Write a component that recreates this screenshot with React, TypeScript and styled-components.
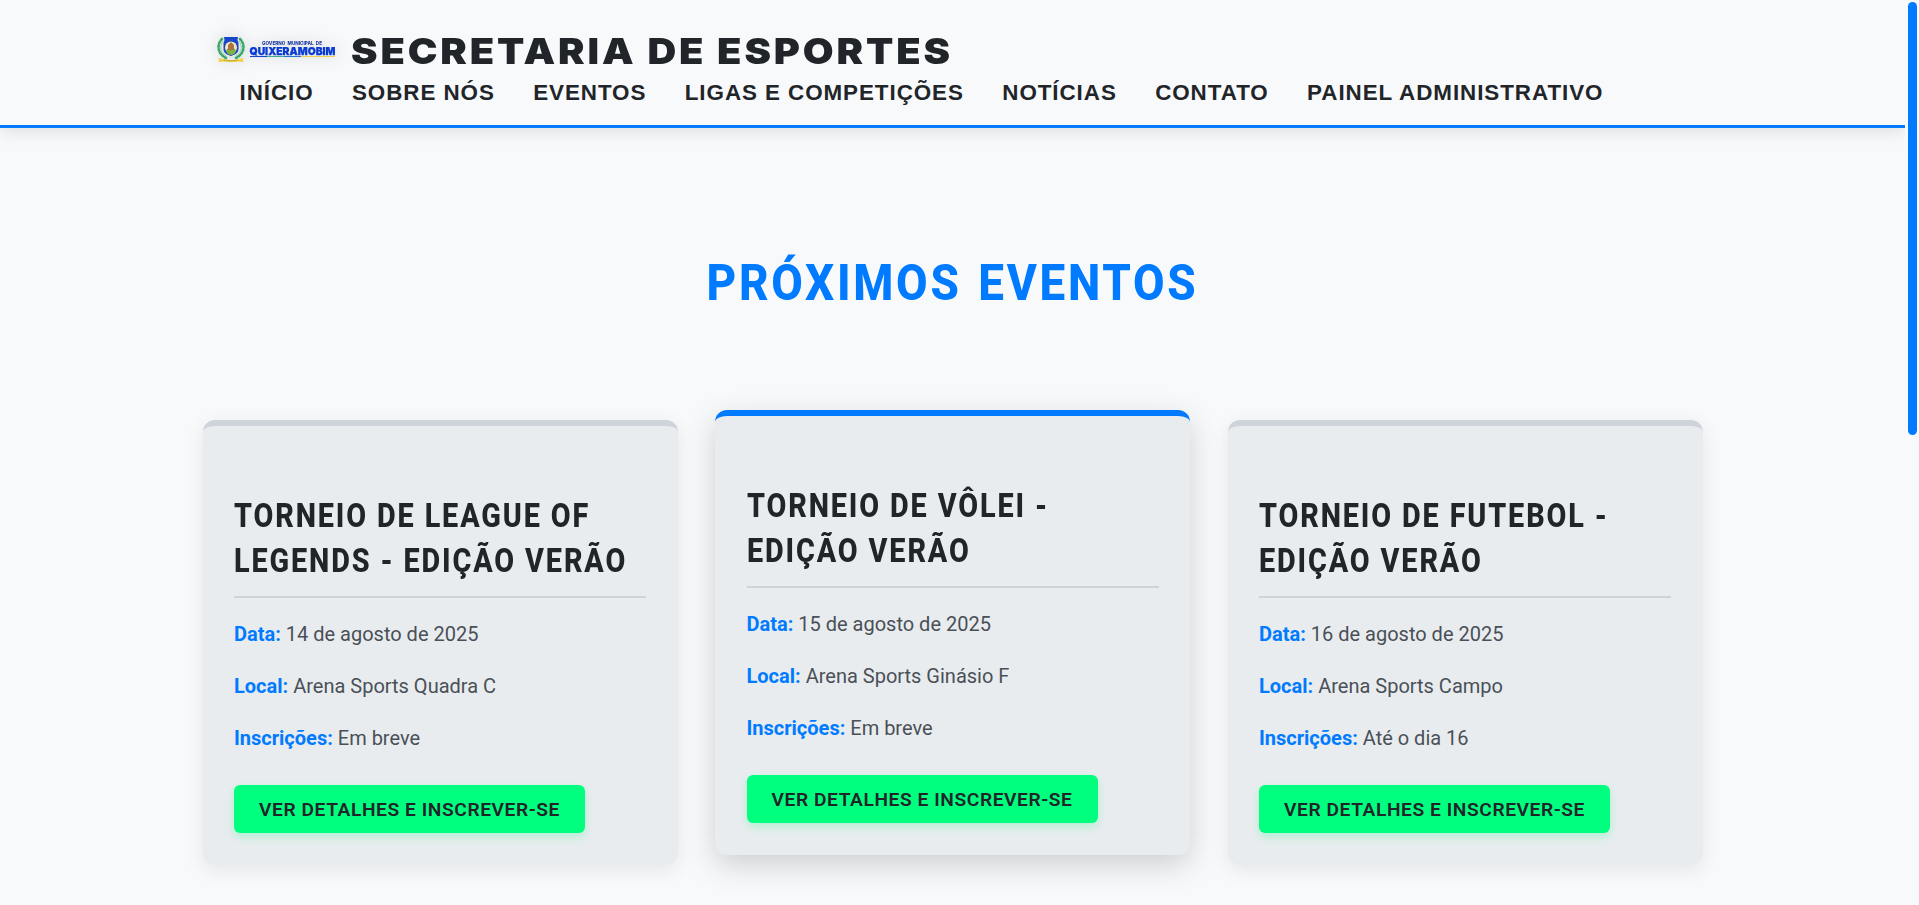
import React from "react";
import styled, { createGlobalStyle, css } from "styled-components";

const GlobalStyle = createGlobalStyle`
  *, *::before, *::after { box-sizing: border-box; }
  body {
    margin: 0;
    background: #f8f9fb;
    color: #212529;
    font-family: Roboto, "Liberation Sans", sans-serif;
    overflow: hidden;
  }
`;

const Page = styled.div`
  display: flex;
  height: 905px;
  overflow: hidden;
`;

const Content = styled.div`
  flex: 1;
  min-width: 0;
  overflow: hidden;
`;

const ScrollTrack = styled.div`
  width: 14px;
  padding: 2px 2px 2px 3px;
`;

const ScrollThumb = styled.div`
  height: 433px;
  border-radius: 5px;
  background: #007bff;
`;

const Header = styled.header`
  height: 128px;
  padding: 25px 0 0 217px;
  border-bottom: 3px solid #007bff;
  box-shadow: 0 4px 15px rgba(0, 0, 0, 0.1);
`;

const Brand = styled.div`
  display: flex;
  align-items: center;
  height: 52px;
`;

const LogoImage = styled.svg`
  width: 120px;
  height: 28px;
  margin: -4px 14px 0 0;
  overflow: visible;
  filter: drop-shadow(0 0 8px rgba(0, 0, 0, 0.15));
`;

const BrandName = styled.span`
  font: 900 36px/52px Inter, "Liberation Sans", sans-serif;
  letter-spacing: 2.6px;
  white-space: nowrap;
  transform: scaleX(1.106);
  transform-origin: left;
`;

const Nav = styled.nav`
  display: flex;
  gap: 38.4px;
  padding: 1px 0 0 22.5px;
`;

const NavLink = styled.a`
  font: 700 22.4px/30px "Liberation Sans", Arial, sans-serif;
  letter-spacing: 0.94px;
  white-space: nowrap;
`;

const Events = styled.section`
  padding-top: 125px;
`;

const condensed = css`
  display: block;
  font-family: Roboto, sans-serif;
  font-weight: 800;
  white-space: nowrap;
`;

const SectionTitle = styled.h2`
  ${condensed}
  margin: 0 0 107px;
  font-size: 50.6px;
  line-height: 60px;
  letter-spacing: 3px;
  word-spacing: 3px;
  text-align: center;
  color: #007bff;
  transform: scaleX(0.905);
`;

const CardGrid = styled.div`
  display: grid;
  grid-template-columns: repeat(3, minmax(0, 1fr));
  gap: 37.5px;
  width: 1500px;
  margin: 0 auto;
`;

const Card = styled.article<{ $active?: boolean }>`
  height: 445px;
  padding: 68px 31.5px 32px;
  border-top: 6px solid ${(p) => (p.$active ? "#007bff" : "#ced4da")};
  border-radius: 12px;
  background: #e9ecef;
  box-shadow: ${(p) =>
    p.$active ? "0 10px 30px rgba(0, 0, 0, 0.17)" : "0 5px 20px rgba(0, 0, 0, 0.08)"};
  transform: ${(p) => (p.$active ? "translateY(-10px)" : "none")};
`;

const CardTitle = styled.h3`
  margin: 0 0 10px;
  padding-bottom: 12px;
  border-bottom: 2px solid #ced4da;
`;

const TitleLine = styled.span`
  ${condensed}
  font-size: 32.4px;
  line-height: 45px;
  letter-spacing: 2.1px;
  transform: scaleX(0.889);
  transform-origin: left;
`;

const Detail = styled.p`
  margin: 0;
  font-size: 20px;
  line-height: 52px;
  color: #495057;
`;

const Label = styled.strong`
  font-weight: 700;
  color: #007bff;
`;

const CardButton = styled.a`
  display: flex;
  align-items: center;
  justify-content: center;
  width: 351px;
  height: 48px;
  margin-top: 21px;
  border-radius: 6px;
  background: #00ff7f;
  box-shadow: 0 4px 10px rgba(0, 255, 127, 0.25);
  font-size: 19.2px;
  font-weight: 600;
  letter-spacing: 0.57px;
  white-space: nowrap;
`;

const links = [
  "INÍCIO",
  "SOBRE NÓS",
  "EVENTOS",
  "LIGAS E COMPETIÇÕES",
  "NOTÍCIAS",
  "CONTATO",
  "PAINEL ADMINISTRATIVO",
];

const events = [
  {
    title: ["TORNEIO DE LEAGUE OF", "LEGENDS - EDIÇÃO VERÃO"],
    date: "14 de agosto de 2025",
    place: "Arena Sports Quadra C",
    signup: "Em breve",
  },
  {
    title: ["TORNEIO DE VÔLEI -", "EDIÇÃO VERÃO"],
    date: "15 de agosto de 2025",
    place: "Arena Sports Ginásio F",
    signup: "Em breve",
    active: true,
  },
  {
    title: ["TORNEIO DE FUTEBOL -", "EDIÇÃO VERÃO"],
    date: "16 de agosto de 2025",
    place: "Arena Sports Campo",
    signup: "Até o dia 16",
  },
];

function Logo() {
  return (
    <LogoImage viewBox="0 0 120 28">
      <g fill="none" strokeLinecap="round">
        <path d="M5 4C-1 10 1 19 9 23M23 4c6 6 4 15-4 19" stroke="#3aa86b" strokeWidth="2.6" strokeDasharray="1.6 2" />
        <path d="M6 6c-4 5-3 11 3 15M22 6c4 5 3 11-3 15" stroke="#86cfa5" strokeWidth="1" />
      </g>
      <path d="M7 2h14l-.5 3 1 3v6c0 4-4 6-7.500 7C10.500 20 6.500 18 6.500 14V8l1-3z" fill="#1747c7" />
      <circle cx="14" cy="12.500" r="6" fill="#f2e6c4" />
      <path d="M9 16c1-3 3-3 5-3s4 0 5 3c-1 3-3 4-5 4s-4-1-5-4z" fill="#7cb342" />
      <path d="M11 10l3-3 3 3v5h-6z" fill="#a9743f" />
      <path d="M1 23l6 1.200c5 1 9 1 14 0L27 23l-1.500 2.200L27 27l-6-.6c-5 .9-9 .9-14 0L1 27l1.500-1.500z" fill="#f0cf3c" />
      <path d="M7 25c5 1 9 1 14 0" stroke="#8b7a2a" strokeWidth=".7" strokeDasharray="1 .7" fill="none" />
      <text x="45" y="10.400" fontFamily="Inter, sans-serif" fontWeight="800" fontSize="5" wordSpacing="1.300" textLength="60" lengthAdjust="spacingAndGlyphs" fill="#1c3a9e">
        GOVERNO MUNICIPAL DE
      </text>
      <text x="32.500" y="20" fontFamily="Inter, sans-serif" fontWeight="900" fontSize="11" textLength="86" lengthAdjust="spacingAndGlyphs" fill="#0a3bd1" stroke="#0a3bd1" strokeWidth=".25">
        QUIXERAMOBIM
      </text>
      <path d="M33 21.500h17" stroke="#1747c7" strokeWidth="1.100" />
      <path d="M50 21.500h17" stroke="#3fae8a" strokeWidth="1.100" />
      <path d="M67 21.500h17" stroke="#2e6fd0" strokeWidth="1.100" />
      <path d="M84 21.500h34" stroke="#f0d24a" strokeWidth="1.100" />
    </LogoImage>
  );
}

export default function App() {
  return (
    <>
      <GlobalStyle />
      <Page>
        <Content>
          <Header>
            <Brand>
              <Logo />
              <BrandName>SECRETARIA DE ESPORTES</BrandName>
            </Brand>
            <Nav>
              {links.map((link) => (
                <NavLink key={link}>{link}</NavLink>
              ))}
            </Nav>
          </Header>
          <Events>
            <SectionTitle>PRÓXIMOS EVENTOS</SectionTitle>
            <CardGrid>
              {events.map((event) => (
                <Card key={event.date} $active={event.active}>
                  <CardTitle>
                    {event.title.map((line) => (
                      <TitleLine key={line}>{line}</TitleLine>
                    ))}
                  </CardTitle>
                  <Detail>
                    <Label>Data:</Label> {event.date}
                  </Detail>
                  <Detail>
                    <Label>Local:</Label> {event.place}
                  </Detail>
                  <Detail>
                    <Label>Inscrições:</Label> {event.signup}
                  </Detail>
                  <CardButton>VER DETALHES E INSCREVER-SE</CardButton>
                </Card>
              ))}
            </CardGrid>
          </Events>
        </Content>
        <ScrollTrack>
          <ScrollThumb />
        </ScrollTrack>
      </Page>
    </>
  );
}
